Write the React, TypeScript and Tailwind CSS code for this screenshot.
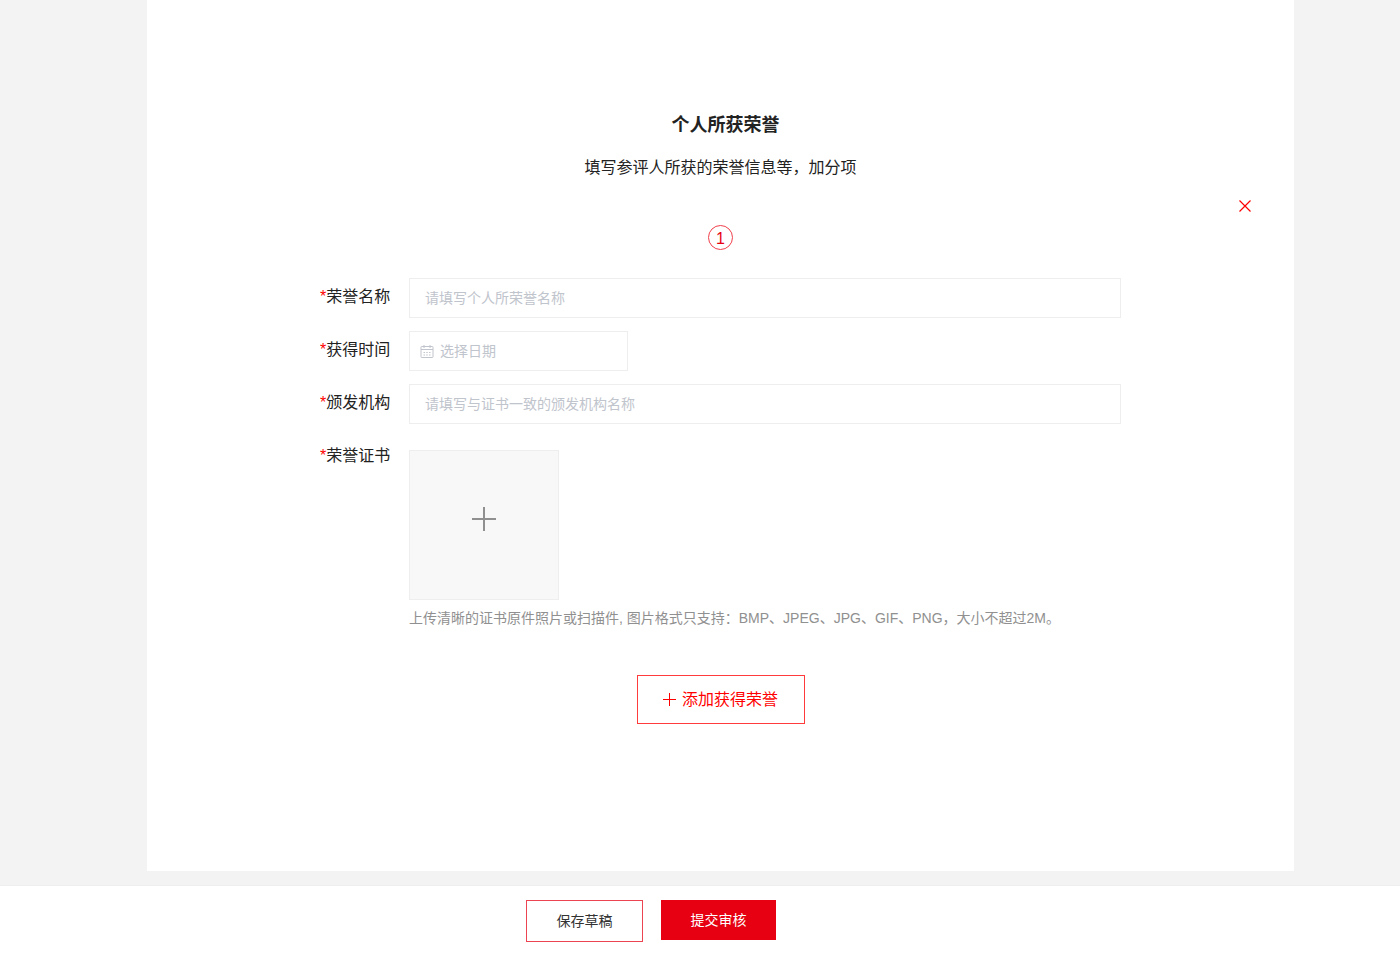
import type { ReactNode } from 'react';

interface FieldProps {
  id: string;
  label: string;
  children: ReactNode;
}

function Field({ id, label, children }: FieldProps) {
  return (
    <div className="flex items-start">
      <label htmlFor={id} className="w-[89px] shrink-0 h-[38px] leading-[38px] text-base">
        <span className="text-[#f00]">*</span>
        {label}
      </label>
      <div className="flex-1 min-w-0">{children}</div>
    </div>
  );
}

function CalendarIcon() {
  return (
    <svg
      width="14"
      height="14"
      viewBox="0 0 14 14"
      fill="none"
      stroke="currentColor"
      className="shrink-0"
      aria-hidden="true"
    >
      <rect x="1" y="2.5" width="12" height="11" rx="0.6" />
      <path d="M1 5.5h12M4 1v3M10 1v3" />
      <path d="M3.5 8.5h1.5M6.25 8.5h1.5M9 8.5h1.5M3.5 11h1.5M6.25 11h1.5M9 11h1.5" />
    </svg>
  );
}

function PlusIcon({ size, strokeWidth }: { size: number; strokeWidth: number }) {
  return (
    <svg
      width={size}
      height={size}
      viewBox={`0 0 ${size} ${size}`}
      fill="none"
      stroke="currentColor"
      strokeWidth={strokeWidth}
      aria-hidden="true"
    >
      <path d={`M0 ${size / 2}H${size}M${size / 2} 0V${size}`} />
    </svg>
  );
}

const inputClass =
  'block w-full h-10 px-[15px] border border-[#eee] bg-white text-sm outline-none placeholder:text-[#c0c4cc] focus:border-[#e60012]';

export default function App() {
  return (
    <div className="min-h-screen flex flex-col bg-[#f3f3f3] text-[#222] font-['Liberation_Sans','Noto_Sans_CJK_SC',sans-serif]">
      <main className="flex-1 pl-[147px] pr-[106px] pb-3.5 flex flex-col">
        <section className="flex-1 bg-white pt-[113px] pb-36 flex flex-col">
          <h2 className="pl-2.5 text-lg leading-6 font-bold text-center">个人所获荣誉</h2>
          <p className="mt-[19px] text-base leading-6 text-center">填写参评人所获的荣誉信息等，加分项</p>

          <div className="mt-4 pr-[39px] flex justify-end">
            <button type="button" aria-label="删除" className="size-5 flex items-center justify-center text-[#f00]">
              <svg width="12" height="12" viewBox="0 0 12 12" stroke="currentColor" strokeWidth="1.2" aria-hidden="true">
                <path d="M0.5 0.5l11 11M11.5 0.5l-11 11" />
              </svg>
            </button>
          </div>

          <div className="mt-[9px] mx-auto size-[25px] rounded-full border border-[#f0404c] text-base leading-[25px] text-center text-[#e60012]">
            1
          </div>

          <form className="mt-7 mx-auto w-full max-w-[801px] flex flex-col gap-[13px]">
            <Field id="honor-name" label="荣誉名称">
              <input id="honor-name" type="text" placeholder="请填写个人所荣誉名称" className={inputClass} />
            </Field>
            <Field id="honor-date" label="获得时间">
              <div className="w-[219px] h-10 px-2.5 flex items-center gap-1.5 border border-[#eee] text-[#c0c4cc]">
                <CalendarIcon />
                <input
                  id="honor-date"
                  type="text"
                  placeholder="选择日期"
                  className="flex-1 min-w-0 text-sm text-[#222] outline-none placeholder:text-[#c0c4cc]"
                />
              </div>
            </Field>
            <Field id="honor-org" label="颁发机构">
              <input id="honor-org" type="text" placeholder="请填写与证书一致的颁发机构名称" className={inputClass} />
            </Field>
            <Field id="honor-cert" label="荣誉证书">
              <button
                id="honor-cert"
                type="button"
                className="mt-[13px] size-[150px] pb-3 flex items-center justify-center border border-[#eee] bg-[#f8f8f8] text-[#909090]"
              >
                <PlusIcon size={24} strokeWidth={2} />
              </button>
              <p className="mt-2 text-sm text-[#909090]">
                上传清晰的证书原件照片或扫描件, 图片格式只支持：BMP、JPEG、JPG、GIF、PNG，大小不超过2M。
              </p>
            </Field>
          </form>

          <button
            type="button"
            className="mt-[47px] mx-auto w-[168px] h-[49px] flex items-center justify-center gap-1.5 border border-[#ff3b3b] text-base text-[#f00]"
          >
            <PlusIcon size={13} strokeWidth={1} />
            添加获得荣誉
          </button>
        </section>
      </main>

      <footer className="h-[69px] pt-3.5 pr-[98px] flex items-start justify-center gap-[18px] border-t border-[#eee] bg-white text-sm">
        <button type="button" className="w-[117px] h-[42px] border border-[#ec4453] text-[#333]">
          保存草稿
        </button>
        <button type="button" className="w-[115px] h-10 bg-[#e60012] text-white">
          提交审核
        </button>
      </footer>
    </div>
  );
}
